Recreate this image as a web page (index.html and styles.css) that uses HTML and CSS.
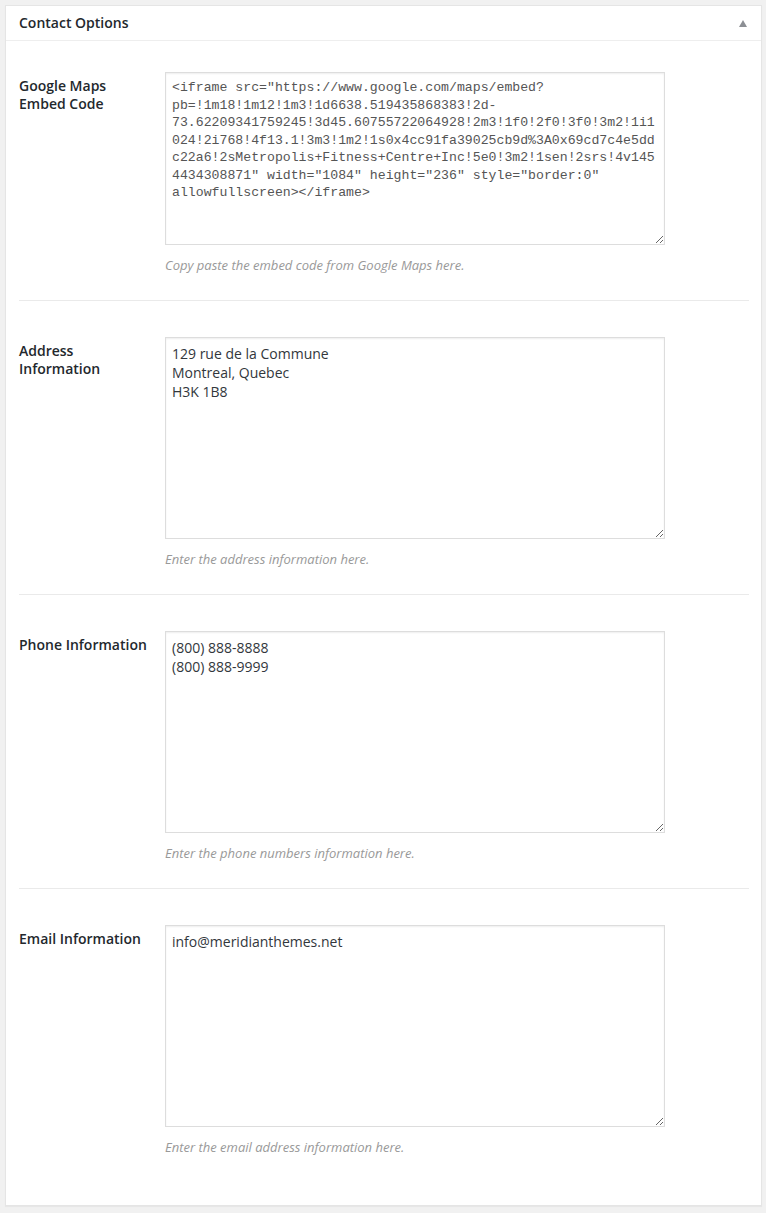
FILE: index.html
```html
<!DOCTYPE html>
<html>
<head>
  <title>Contact Options</title>
  <link rel="stylesheet" href="styles.css">
</head>
<body>
  <div class="postbox">
    <div class="hndle">
      <h2>Contact Options</h2>
      <span class="toggle-arrow"></span>
    </div>

    <div class="inside">
      <div class="field-row">
        <label class="field-label" for="map-embed">Google Maps Embed Code</label>
        <div class="field-input">
          <textarea id="map-embed" class="code short">&lt;iframe src="https://www.google.com/maps/embed?
pb=!1m18!1m12!1m3!1d6638.519435868383!2d-
73.62209341759245!3d45.60755722064928!2m3!1f0!2f0!3f0!3m2!1i1
024!2i768!4f13.1!3m3!1m2!1s0x4cc91fa39025cb9d%3A0x69cd7c4e5dd
c22a6!2sMetropolis+Fitness+Centre+Inc!5e0!3m2!1sen!2srs!4v145
4434308871" width="1084" height="236" style="border:0" allowfullscreen>&lt;/iframe></textarea>
          <p class="description">Copy paste the embed code from Google Maps here.</p>
        </div>
      </div>

      <div class="field-row">
        <label class="field-label" for="address">Address Information</label>
        <div class="field-input">
          <textarea id="address">129 rue de la Commune
Montreal, Quebec
H3K 1B8</textarea>
          <p class="description">Enter the address information here.</p>
        </div>
      </div>

      <div class="field-row">
        <label class="field-label" for="phone">Phone Information</label>
        <div class="field-input">
          <textarea id="phone">(800) 888-8888
(800) 888-9999</textarea>
          <p class="description">Enter the phone numbers information here.</p>
        </div>
      </div>

      <div class="field-row">
        <label class="field-label" for="email">Email Information</label>
        <div class="field-input">
          <textarea id="email">info@meridianthemes.net</textarea>
          <p class="description">Enter the email address information here.</p>
        </div>
      </div>
    </div>
  </div>
</body>
</html>
```

FILE: styles.css
```css
body {
  margin: 0;
  padding: 5px 4px 7px 5px;
  background: #f1f1f1;
  font-family: "Open Sans", sans-serif;
  color: #23282d;
}
.postbox {
  background: #fff;
  border: 1px solid #e5e5e5;
  box-shadow: 0 1px 1px rgba(0, 0, 0, 0.04);
}
.hndle {
  display: flex;
  align-items: center;
  justify-content: space-between;
  padding: 8px 14px 8px 13px;
  border-bottom: 1px solid #eee;
}
.hndle h2 {
  margin: 0;
  font-size: 14px;
  line-height: 18px;
  font-weight: 600;
}
.toggle-arrow {
  width: 0;
  height: 0;
  border-left: 4px solid transparent;
  border-right: 4px solid transparent;
  border-bottom: 7px solid #8c8f94;
}
.inside {
  padding: 0 12px 23px 13px;
}
.field-row {
  display: flex;
  padding: 36px 0 26px 0;
  border-bottom: 1px solid #eaeaea;
}
.field-row:first-child {
  padding-top: 31px;
}
.field-row:last-child {
  border-bottom: none;
}
.field-label {
  width: 146px;
  flex: none;
  padding-top: 5px;
  padding-right: 10px;
  box-sizing: border-box;
  font-size: 14px;
  line-height: 18px;
  font-weight: 600;
}
.field-input textarea {
  display: block;
  box-sizing: border-box;
  width: 500px;
  height: 202px;
  margin: 0;
  padding: 6px;
  border: 1px solid #ddd;
  box-shadow: inset 0 1px 2px rgba(0, 0, 0, 0.07);
  font-family: "Open Sans", sans-serif;
  font-size: 14px;
  line-height: 19px;
  color: #32373c;
  resize: vertical;
}
.field-input textarea.code {
  font-family: "Liberation Mono", "Courier New", monospace;
  font-size: 13.2px;
  line-height: 17.5px;
  color: #555;
}
.field-input textarea.short {
  height: 173px;
}
.description {
  margin: 11px 0 0 0;
  font-size: 13px;
  line-height: 18px;
  font-style: italic;
  color: #999;
}
```
